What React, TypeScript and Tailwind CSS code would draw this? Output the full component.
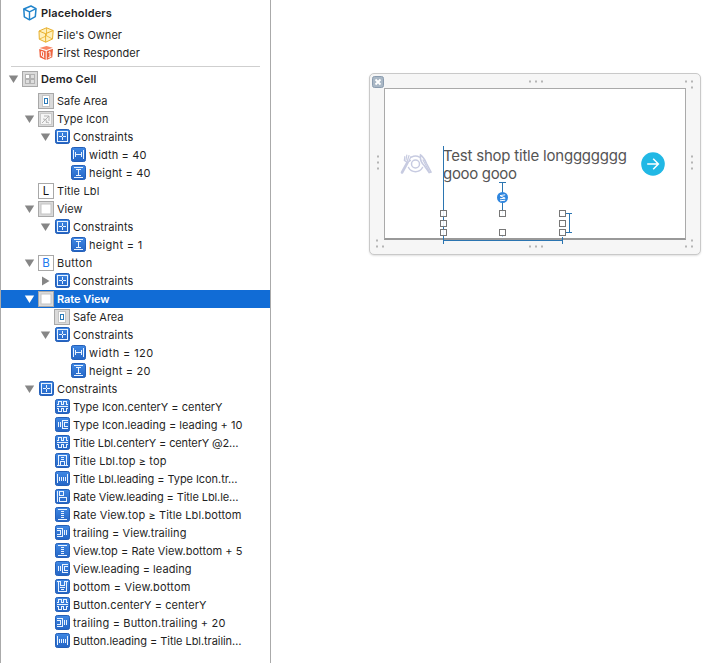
import React from "react";

type Kind =
  | "cell" | "safe" | "image" | "all" | "width" | "height" | "label" | "view" | "button"
  | "centerY" | "leading" | "top" | "hspace" | "alignLeading" | "vspace" | "trailing" | "bottom";

type Item = {
  level: number;
  icon: Kind;
  text: string;
  w: number;
  open?: boolean;
  closed?: boolean;
  selected?: boolean;
};

const items: Item[] = [
  { level: 1, icon: "safe", text: "Safe Area", w: 50 },
  { level: 1, icon: "image", text: "Type Icon", w: 51, open: true },
  { level: 2, icon: "all", text: "Constraints", w: 60, open: true },
  { level: 3, icon: "width", text: "width = 40", w: 57 },
  { level: 3, icon: "height", text: "height = 40", w: 61 },
  { level: 1, icon: "label", text: "Title Lbl", w: 42 },
  { level: 1, icon: "view", text: "View", w: 25, open: true },
  { level: 2, icon: "all", text: "Constraints", w: 60, open: true },
  { level: 3, icon: "height", text: "height = 1", w: 53 },
  { level: 1, icon: "button", text: "Button", w: 35, open: true },
  { level: 2, icon: "all", text: "Constraints", w: 60, closed: true },
  { level: 1, icon: "view", text: "Rate View", w: 52, open: true, selected: true },
  { level: 2, icon: "safe", text: "Safe Area", w: 50 },
  { level: 2, icon: "all", text: "Constraints", w: 60, open: true },
  { level: 3, icon: "width", text: "width = 120", w: 64 },
  { level: 3, icon: "height", text: "height = 20", w: 61 },
  { level: 1, icon: "all", text: "Constraints", w: 60, open: true },
  { level: 2, icon: "centerY", text: "Type Icon.centerY = centerY", w: 149 },
  { level: 2, icon: "leading", text: "Type Icon.leading = leading + 10", w: 169 },
  { level: 2, icon: "centerY", text: "Title Lbl.centerY = centerY @2…", w: 165 },
  { level: 2, icon: "top", text: "Title Lbl.top ≥ top", w: 93 },
  { level: 2, icon: "hspace", text: "Title Lbl.leading = Type Icon.tr…", w: 164 },
  { level: 2, icon: "alignLeading", text: "Rate View.leading = Title Lbl.le…", w: 165 },
  { level: 2, icon: "vspace", text: "Rate View.top ≥ Title Lbl.bottom", w: 168 },
  { level: 2, icon: "trailing", text: "trailing = View.trailing", w: 113 },
  { level: 2, icon: "vspace", text: "View.top = Rate View.bottom + 5", w: 169 },
  { level: 2, icon: "leading", text: "View.leading = leading", w: 118 },
  { level: 2, icon: "bottom", text: "bottom = View.bottom", w: 117 },
  { level: 2, icon: "centerY", text: "Button.centerY = centerY", w: 133 },
  { level: 2, icon: "trailing", text: "trailing = Button.trailing + 20", w: 152 },
  { level: 2, icon: "hspace", text: "Button.leading = Title Lbl.trailin…", w: 168 },
];

const indent = ["pl-[7px]", "pl-[23px]", "pl-[39px]", "pl-[55px]"];

const glyphs: Partial<Record<Kind, string>> = {
  all: "M3.5 2.5h10v10h-10zM8.5 4v3M8.5 8v3M5 7.5h3M9 7.5h3",
  width: "M3.5 3v9M13.5 3v9M5.5 5v5M11.5 5v5M6 7.5h5",
  height: "M4 2.5h9M4 12.5h9M6 4.5h5M6 10.5h5M8.5 5v5",
  centerY: "M4.5 6V2.5h3V6M9.5 6V2.5h3V6M3 5.5h2M7 5.5h3M12 5.5h2M3 7.5h11M4.5 9v3.5h3V9M9.5 9v3.5h3V9M3 9.5h2M7 9.5h3M12 9.5h2",
  leading: "M4.5 5v5M6.5 5v5M14 3.5H8.5v8H14M14 5.5h-3.5v4H14",
  trailing: "M3 3.5h5.500v8H3M3 5.5h3.500v4H3M10.5 5v5M12.5 5v5",
  top: "M4.5 12V2.5h8V12M7 4.5h3M7 6.5h3M6.5 12V8.5h4V12M3 12.5h11",
  bottom: "M3 2.5h4M10 2.5h4M4.5 3v9.5h8V3M6.5 3v3.5h4V3M6 8.5h5M7 10.5h3",
  hspace: "M3.5 3v9M13.5 3v9M5.5 5.5v4M7.5 5.5v4M9.5 5.5v4M11.5 5.5v4",
  vspace: "M4 2.5h9M4 12.5h9M7 4.5h3M7 6.5h3M7 8.5h3M7 10.5h3",
  alignLeading: "M3.5 2v11M5.5 2.5h4v4h-4zM5.5 8.5h7v4h-7z",
};

function Icon({ kind }: { kind: Kind }) {
  const glyph = glyphs[kind];
  if (glyph) {
    return (
      <svg width="16" height="16" viewBox="0 0 16 16" className="shrink-0">
        <defs>
          <linearGradient id="blueTile" x1="0" y1="0" x2="0" y2="1">
            <stop offset="0" stopColor="#3f88e4" />
            <stop offset="1" stopColor="#2465c5" />
          </linearGradient>
        </defs>
        <rect x="1.5" y="0.5" width="14" height="14" rx="1.8" fill="url(#blueTile)" stroke="#245fb8" />
        <path d={glyph} fill="none" stroke="#eaf3ff" shapeRendering="crispEdges" />
      </svg>
    );
  }
  const gray = kind === "safe" || kind === "view" || kind === "cell" || kind === "image";
  return (
    <svg width="16" height="16" viewBox="0 0 16 16" className="shrink-0">
      <rect x="0.5" y="0.5" width="15" height="15" fill={gray ? "#dadada" : "#fff"} stroke="#a8a8a8" />
      {kind === "safe" && (
        <>
          <rect x="4.5" y="2.5" width="7" height="11" fill="#fff" stroke="#c4c4c4" />
          <rect x="6.5" y="5.5" width="3" height="5" fill="#fff" stroke="#2a7ab8" />
        </>
      )}
      {kind === "view" && <rect x="3" y="3" width="10" height="10" fill="#fff" stroke="#c3c3c3" />}
      {kind === "cell" && (
        <g fill="#dedede" stroke="#b2b2b2">
          <rect x="3.5" y="3.5" width="4" height="4" fill="#fff" />
          <rect x="8.5" y="3.5" width="4" height="4" />
          <rect x="3.5" y="8.5" width="4" height="4" />
          <rect x="8.5" y="8.5" width="4" height="4" />
        </g>
      )}
      {kind === "image" && (
        <>
          <rect x="2.5" y="2.5" width="11" height="11" fill="#f5f5f5" stroke="#cacaca" />
          <path d="M6 5h5v5M11 5L4 12M5 8l3 .5.5 3.500M9 11l2 1" fill="none" stroke="#adadad" strokeWidth=".9" />
        </>
      )}
      {(kind === "label" || kind === "button") && (
        <text
          x="8" y="12" textAnchor="middle" fontSize="11.500"
          fontFamily="Inter, sans-serif" fill={kind === "label" ? "#111" : "#2079ee"}
        >
          {kind === "label" ? "L" : "B"}
        </text>
      )}
    </svg>
  );
}

/* Spreads a label's glyphs to the advance width the outline uses. */
function Label({ text, w, bold, light }: { text: string; w: number; bold?: boolean; light?: boolean }) {
  const ref = React.useRef<HTMLSpanElement>(null);
  const [spacing, setSpacing] = React.useState(0);
  React.useLayoutEffect(() => {
    if (ref.current) {
      const natural = ref.current.getBoundingClientRect().width;
      setSpacing((w - natural) / text.length);
    }
  }, []);
  return (
    <span
      ref={ref}
      style={{ letterSpacing: `${spacing}px` }}
      className={`ml-[3px] whitespace-pre leading-[18px] ${bold ? "font-semibold" : ""} ${light ? "text-white" : "text-[#1f1f1f]"}`}
    >
      {text}
    </span>
  );
}

function Arrow({ open, closed, light }: { open?: boolean; closed?: boolean; light?: boolean }) {
  return (
    <svg width="14" height="16" viewBox="0 0 14 16" className="shrink-0">
      {open && <path d="M.8 4.500h9.400L5.500 12z" fill={light ? "#fff" : "#868686"} />}
      {closed && <path d="M2 3.500v9L9.500 8z" fill="#868686" />}
    </svg>
  );
}

function Row({ level, icon, text, w, open, closed, selected, bold }: Item & { bold?: boolean }) {
  return (
    <div className={`flex h-[18px] items-center ${indent[level]} ${selected ? "bg-[#116cd6]" : ""}`}>
      <Arrow open={open} closed={closed} light={selected} />
      <Icon kind={icon} />
      <Label text={text} w={w + 0.5} bold={bold || selected} light={selected} />
    </div>
  );
}

function Cube({ fill, stroke, mesh }: { fill: string; stroke: string; mesh?: boolean }) {
  return (
    <svg width="16" height="16" viewBox="0 0 16 16" className="shrink-0" fill="none" stroke={stroke} strokeLinejoin="round">
      <path d={mesh ? "M1 4L8.500 .8l6.700 2.700-.7 8.500L7.700 15.200 1.300 12.200z" : "M1.800 4L9 1l5 2.600-.7 8L7.500 14.800 2.300 11.800z"} fill={fill} strokeWidth={mesh ? "1" : "1.500"} />
      <path d={mesh ? "M1 4l6.500 2.700 7.700-3.200M7.500 6.700l.2 8.500" : "M1.800 4l5.700 2.800L14 3.600M7.500 6.800v8"} strokeWidth={mesh ? "1" : "1.400"} />
      {mesh && <path d="M8.500 .8v8L1.300 12.200M8.500 8.800l6 3.200" strokeWidth=".8" />}
    </svg>
  );
}

function Responder() {
  return (
    <svg width="16" height="16" viewBox="0 0 16 16" className="shrink-0">
      <path d="M1.500 3L8.500 1l6.300 1.800-6.300 2.200z" fill="#f98765" />
      <path d="M1.200 4l6.500 2v9L1.800 12.200z" fill="#f0603d" />
      <path d="M8.700 6L15 3.800l-.7 8.500L8.700 15z" fill="#ec6540" />
      <path d="M3.300 6.500l2.300.7v4.600l-2-1zM5 11.500l1 1.300M10.500 7.500l1.500-.8v5M10.300 12.700l3-1.400" fill="none" stroke="#fff" />
    </svg>
  );
}

function Outline() {
  return (
    <aside className="h-[663px] w-[271px] shrink-0 overflow-hidden border-x border-[#aaaaaa] bg-white text-[11px]">
      <div className="flex h-[26px] items-center pl-[21px]">
        <Cube fill="#fff" stroke="#2184cb" />
        <Label text="Placeholders" w={71} bold />
      </div>
      <div className="flex h-[18px] items-center pl-[37px]">
        <Cube fill="#fff0bd" stroke="#e8b02d" mesh />
        <Label text="File's Owner" w={65} />
      </div>
      <div className="flex h-[18px] items-center pl-[37px]">
        <Responder />
        <Label text="First Responder" w={83} />
      </div>
      <div className="ml-[10px] mr-[10px] mt-[4px] h-px bg-[#cfcfcf]" />
      <div className="mb-[4px] mt-[3px]">
        <Row level={0} icon="cell" text="Demo Cell" w={55} open bold />
      </div>
      {items.map((item, i) => (
        <Row key={i} {...item} />
      ))}
    </aside>
  );
}

function Dots({ d }: { d: string }) {
  return <path d={d} stroke="#b5b5b5" strokeWidth="2" strokeLinecap="butt" />;
}

/* Frame grips, constraint lines and selection handles, in the frame's own coordinates. */
function Overlay() {
  const handles = [
    [74, 140], [74, 150], [74, 159], [133, 140], [133, 159], [193, 140], [193, 150], [193, 159],
  ];
  return (
    <svg className="absolute -left-px -top-px" width="332" height="182" viewBox="0 0 332 182" fill="none">
      <Dots d="M160 8.500h2M166 8.500h2M172 8.500h2M160 173.500h2M166 173.500h2M172 173.500h2M8 83.500h2M8 89.500h2M8 95.500h2M322 83.500h2M322 89.500h2M322 95.500h2M316 8.500h2M322 8.500h2M322 14.500h2M7 167.500h2M7 173.500h2M13 173.500h2M322 167.500h2M316 173.500h2M322 173.500h2" />
      <g stroke="#2b75b1" shapeRendering="crispEdges">
        <path d="M74.500 73v98M74 167.500h120M193.500 164v7M133.500 109v55M130 109.500h7M196 140.500h7M196 159.500h7M200.500 140v20" />
      </g>
      <path d="M133.500 141v22" stroke="#fff" strokeWidth="2" />
      <path d="M133.500 140v4M133.500 161v3" stroke="#aaccea" />
      {handles.map(([x, y]) => (
        <rect key={`${x}-${y}`} x={x - 2.500} y={y - 2.500} width="6" height="6" fill="#fff" fillOpacity=".88" stroke="#777" />
      ))}
      <circle cx="133.500" cy="124.500" r="5.500" fill="#2f86df" />
      <path d="M136.200 121.800l-5.200.8 5.200 2.600-5.200.6M131 127.800l5.200-.6" stroke="#fff" strokeWidth="1" />
      <rect x="3.500" y="3.500" width="11" height="11" rx="2" fill="#a9b7c5" stroke="#8b9caf" />
      <path d="M6.500 6.500l5 5M11.500 6.500l-5 5" stroke="#fff" strokeWidth="1.800" />
    </svg>
  );
}

function DiningIcon() {
  return (
    <svg width="32" height="22" viewBox="0 0 32 22" fill="none" stroke="#c7cbe1" strokeLinecap="round">
      <circle cx="15.500" cy="11" r="4" strokeWidth="1.500" />
      <path d="M11.500 4.200a8 8 0 0 1 8 0M8.500 14.500a8 8 0 0 0 14 0" strokeWidth="1.500" />
      <path d="M2 19.500L7.500 9.500" strokeWidth="2.600" />
      <path d="M4.800 3.500L4.300 7.500 7.500 9.500l3-2M6.800 2L6 7M9 2.500L7.500 7.500M11 3.500L9 8" strokeWidth="1.200" />
      <path d="M20.500 2c3 2 4.500 5 6 8.500l4.500 8.500-1.800.5-5-7C21 9.500 20 5.500 20.500 2z" strokeWidth="1.600" />
      <path d="M23 7l6 11" strokeWidth="1.200" />
    </svg>
  );
}

function Title({ text, w }: { text: string; w: number }) {
  return (
    <svg width="190" height="18" className="block">
      <text x="0" y="14" fontSize="15" fill="#555" textLength={w} fontFamily="Inter, sans-serif">{text}</text>
    </svg>
  );
}

function CellFrame() {
  return (
    <div className="relative ml-[98px] mt-[73px] h-[182px] w-[332px] rounded-[5px] border border-[#c9c9c9] bg-[#f6f6f6] p-[14px] shadow-[0_1px_2px_rgba(0,0,0,0.12)]">
      <div className="flex h-[152px] w-[302px] items-start border border-b-2 border-[#aaa] border-b-[#999] bg-white">
        <div className="ml-[15px] mt-[64px] w-[32px] shrink-0">
          <DiningIcon />
        </div>
        <div className="ml-[11px] mt-[58px] w-[190px] shrink-0">
          <Title text="Test shop title longgggggg" w={184} />
          <Title text="gooo gooo" w={74} />
        </div>
        <svg className="ml-[8px] mt-[63px] shrink-0" width="24" height="24" viewBox="0 0 24 24" fill="none">
          <circle cx="12" cy="12" r="11.800" fill="#21b8e5" />
          <path d="M6.200 12h11M12.200 6.800l5.200 5.200-5.200 5.200" stroke="#fff" strokeWidth="1.500" />
        </svg>
      </div>
      <Overlay />
    </div>
  );
}

export default function App() {
  return (
    <div className="flex h-[663px] w-[717px] overflow-hidden bg-white font-['Inter',sans-serif]">
      <Outline />
      <main className="flex-1">
        <CellFrame />
      </main>
    </div>
  );
}
